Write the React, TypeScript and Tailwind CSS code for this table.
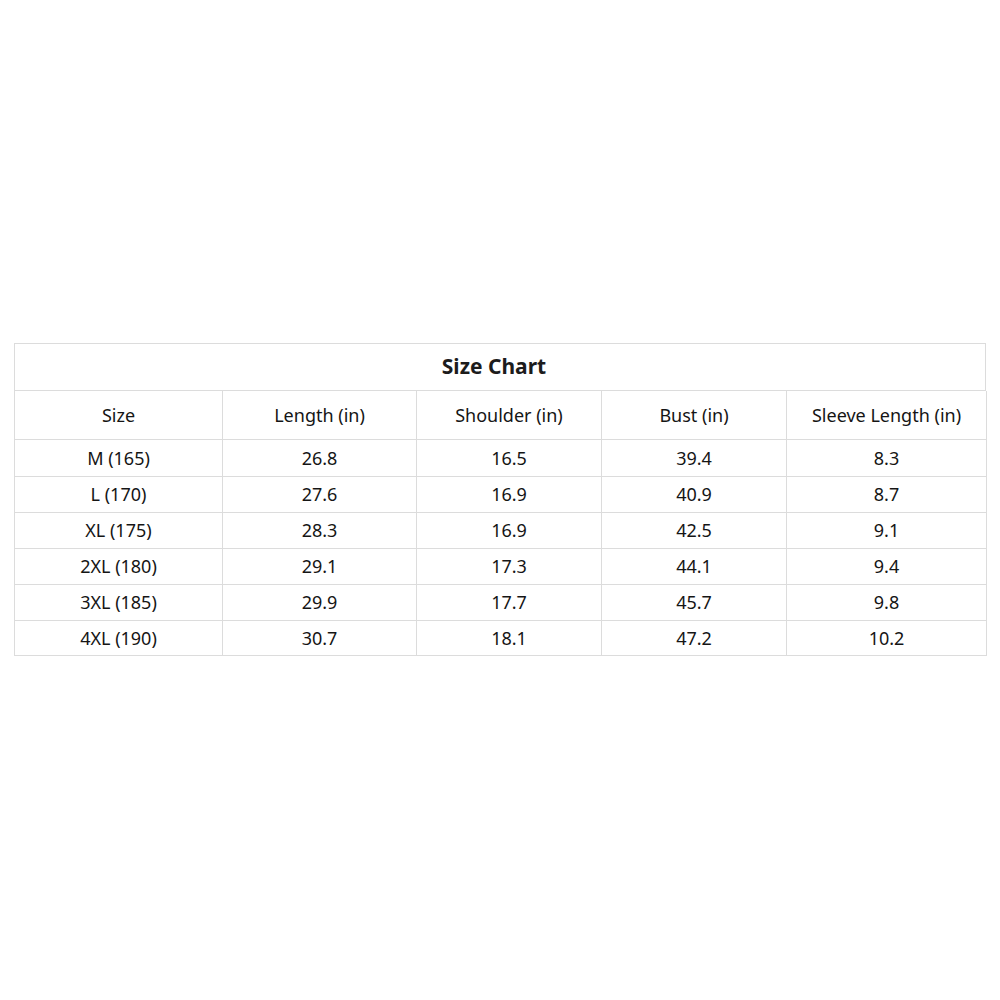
import React from "react";

const headers = ["Size", "Length (in)", "Shoulder (in)", "Bust (in)", "Sleeve Length (in)"];
const rows = [
  ["M (165)", "26.8", "16.5", "39.4", "8.3"],
  ["L (170)", "27.6", "16.9", "40.9", "8.7"],
  ["XL (175)", "28.3", "16.9", "42.5", "9.1"],
  ["2XL (180)", "29.1", "17.3", "44.1", "9.4"],
  ["3XL (185)", "29.9", "17.7", "45.7", "9.8"],
  ["4XL (190)", "30.7", "18.1", "47.2", "10.2"],
];
const rowH = ["h-[37px]", "h-[36px]", "h-[36px]", "h-[36px]", "h-[36px]", "h-[35px]"];

export default function App() {
  return (
    <div className="w-[1000px] h-[1000px] bg-white pt-[343px] pl-[14px]" style={{ fontFamily: '"Noto Sans", "DejaVu Sans", sans-serif' }}>
      <div className="w-[972px] border-l border-t border-[#dcdcdc] text-[#151515]">
        <div className="h-[47px] pr-[12px] border-r border-b border-[#dcdcdc] flex items-center justify-center text-[21px] font-bold text-[#1c1c1c]">
          Size Chart
        </div>
        <div className="grid grid-cols-[208px_194px_185px_185px_200px]">
          {headers.map((h, i) => (
            <div key={i} className="h-[49px] border-r border-b border-[#dcdcdc] flex items-center justify-center text-[18px]">
              {h}
            </div>
          ))}
          {rows.map((r, ri) =>
            r.map((c, ci) => (
              <div key={ri + "-" + ci} className={`${rowH[ri]} border-r border-b border-[#dcdcdc] flex items-center justify-center text-[18px]`}>
                {c}
              </div>
            ))
          )}
        </div>
      </div>
    </div>
  );
}
